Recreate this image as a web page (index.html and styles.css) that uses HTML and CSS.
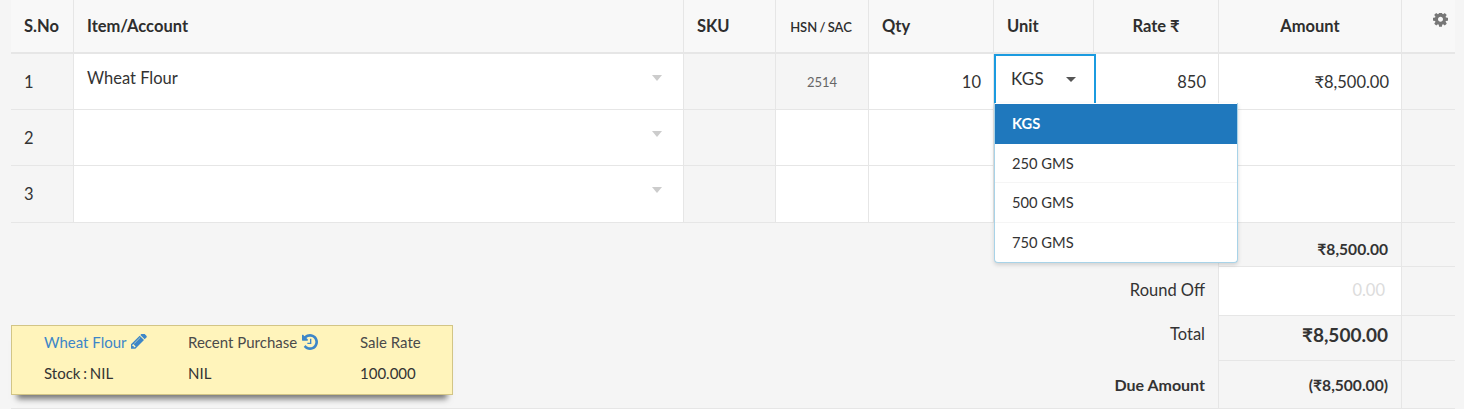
FILE: index.html
```html
<!DOCTYPE html>
<html lang="en">
<head>
<meta charset="utf-8">
<title>Invoice items</title>
<link rel="stylesheet" href="styles.css">
</head>
<body>
<main class="sheet">
  <div class="row head">
    <div class="cell">S.No</div>
    <div class="cell">Item/Account</div>
    <div class="cell">SKU</div>
    <div class="cell hsn-head">HSN / SAC</div>
    <div class="cell">Qty</div>
    <div class="cell">Unit</div>
    <div class="cell c-center">Rate ₹</div>
    <div class="cell c-center">Amount</div>
    <div class="cell gear-cell">
      <svg class="gear" viewBox="0 0 1536 1536"><path d="M1024 640q0-106-75-181t-181-75-181 75-75 181 75 181 181 75 181-75 75-181zm512-109v222q0 12-8 23t-20 13l-185 28q-19 54-39 91 35 50 107 138 10 12 10 25t-9 23q-27 37-99 108t-94 71q-12 0-26-9l-138-108q-44 23-91 38-16 136-29 186-7 28-36 28h-222q-14 0-24.5-8.5t-11.5-21.5l-28-184q-49-16-90-37l-141 107q-10 9-25 9-14 0-25-11-126-114-165-168-7-10-7-23 0-12 8-23 15-21 51-66.5t54-70.5q-27-50-41-99l-183-27q-13-2-21-12.5t-8-23.5v-222q0-12 8-23t19-13l186-28q14-46 39-92-40-57-107-138-10-12-10-24 0-10 9-23 26-36 98.5-107.5t94.5-71.5q13 0 26 10l138 107q44-23 91-38 16-136 29-186 7-28 36-28h222q14 0 24.5 8.5t11.5 21.5l28 184q49 16 90 37l142-107q9-9 24-9 13 0 25 10 129 119 165 170 7 8 7 22 0 12-8 23-15 21-51 66.5t-54 70.5q26 50 41 98l183 28q13 2 21 12.5t8 23.5z"/></svg>
    </div>
  </div>

  <div class="row item">
    <div class="cell sno">1</div>
    <div class="cell white pick"><span>Wheat Flour</span><i class="caret"></i></div>
    <div class="cell"></div>
    <div class="cell hsn">2514</div>
    <div class="cell white num">10</div>
    <div class="cell white unit"><span>KGS</span><i class="caret dark"></i></div>
    <div class="cell white num">850</div>
    <div class="cell white num">₹8,500.00</div>
    <div class="cell"></div>
  </div>
  <div class="row item">
    <div class="cell sno">2</div>
    <div class="cell white pick"><span></span><i class="caret"></i></div>
    <div class="cell"></div>
    <div class="cell white"></div>
    <div class="cell white"></div>
    <div class="cell white"></div>
    <div class="cell white"></div>
    <div class="cell white"></div>
    <div class="cell"></div>
  </div>
  <div class="row item last">
    <div class="cell sno">3</div>
    <div class="cell white pick"><span></span><i class="caret"></i></div>
    <div class="cell"></div>
    <div class="cell white"></div>
    <div class="cell white"></div>
    <div class="cell white"></div>
    <div class="cell white"></div>
    <div class="cell white"></div>
    <div class="cell"></div>
  </div>

  <ul class="menu">
    <li class="active">KGS</li>
    <li>250 GMS</li>
    <li>500 GMS</li>
    <li>750 GMS</li>
  </ul>

  <section class="summary">
    <div class="info">
      <div class="info-col col-a">
        <div class="link">Wheat Flour
          <svg class="ico" viewBox="0 0 1536 1536"><path d="M363 1280l91-91-235-235-91 91v107h128v128h107zm523-928q0-22-22-22-10 0-17 7l-542 542q-7 7-7 17 0 22 22 22 10 0 17-7l542-542q7-7 7-17zm-54-192l416 416-832 832h-416v-416zm683 96q0 53-37 90l-166 166-416-416 166-165q36-38 90-38 53 0 91 38l235 234q37 39 37 91z"/></svg>
        </div>
        <div class="val stock">Stock : NIL</div>
      </div>
      <div class="info-col col-b">
        <div class="lab">Recent Purchase
          <svg class="ico" viewBox="0 0 1536 1536"><path d="M1536 768q0 156-61 298t-164 245-245 164-298 61q-172 0-327-72.5t-264-204.5q-7-10-6.5-22.5t8.5-20.5l137-138q10-9 25-9 16 2 23 12 73 95 179 147t225 52q104 0 198.5-40.5t163.5-109.5 109.5-163.5 40.5-198.5-40.5-198.5-109.5-163.5-163.5-109.5-198.5-40.5q-98 0-188 35.5t-160 101.5l137 138q31 30 14 69-17 40-59 40h-448q-26 0-45-19t-19-45v-448q0-42 40-59 39-17 69 14l130 129q107-101 244.5-156.5t284.5-55.5q156 0 298 61t245 164 164 245 61 298zm-640-288v448q0 14-9 23t-23 9h-320q-14 0-23-9t-9-23v-64q0-14 9-23t23-9h224v-352q0-14 9-23t23-9h64q14 0 23 9t9 23z"/></svg>
        </div>
        <div class="val">NIL</div>
      </div>
      <div class="info-col">
        <div class="lab">Sale Rate</div>
        <div class="val">100.000</div>
      </div>
    </div>

    <div class="totals">
      <div class="t-row t-sub">
        <div class="t-label"></div>
        <div class="t-val strong">₹8,500.00</div>
        <div class="t-end"></div>
      </div>
      <div class="t-row t-round">
        <div class="t-label">Round Off</div>
        <div class="t-val white ghost">0.00</div>
        <div class="t-end"></div>
      </div>
      <div class="t-row t-total">
        <div class="t-label">Total</div>
        <div class="t-val big">₹8,500.00</div>
        <div class="t-end"></div>
      </div>
      <div class="t-row t-due">
        <div class="t-label strong due-label">Due Amount</div>
        <div class="t-val strong">(₹8,500.00)</div>
        <div class="t-end"></div>
      </div>
    </div>
  </section>
</main>
</body>
</html>
```

FILE: styles.css
```css
* { box-sizing: border-box; }
html, body { margin: 0; padding: 0; }
body {
  width: 1464px;
  height: 409px;
  overflow: hidden;
  background: #f5f5f5;
  color: #333;
  font-family: Lato, "Noto Sans", sans-serif;
  font-size: 16.5px;
}
.sheet { position: relative; margin-left: 11px; width: 1444px; }

.row {
  display: grid;
  grid-template-columns: 63px 610px 92px 93px 125px 100px 125px 183px 53px;
  grid-template-rows: minmax(0, 1fr);
  border-bottom: 1px solid #e6e6e6;
}
.cell { border-right: 1px solid #e6e6e6; padding: 0 13px; }
.cell:last-child { border-right: 0; }

.head { height: 54px; background: #f8f8f8; border-bottom-width: 2px; font-weight: 700; line-height: 52px; color: #2e2e2e; }
.c-center { text-align: center; }
.hsn-head { font-size: 13px; font-weight: 600; word-spacing: -1px; padding: 1px 2px 0 0; text-align: center; }
.gear-cell { display: flex; justify-content: flex-end; padding: 13px 7px 0 0; }
.gear { width: 15px; height: 15px; fill: #777; }

.item { height: 56px; }
.item.last { height: 57px; }
.sno { line-height: 57px; }
.white { background: #fff; }
.pick { display: flex; justify-content: space-between; padding: 9px 21px 0 13px; line-height: 30px; }
.caret { width: 0; height: 0; border: 5px solid transparent; border-top: 6px solid #ccc; border-bottom: 0; margin-top: 12px; }
.caret.dark { border-top: 5px solid #555; margin-top: 13px; }
.hsn { background: #f5f5f5; font-size: 13px; color: #666; text-align: center; line-height: 57px; padding: 0; }
.num { text-align: right; line-height: 56px; padding: 0 12px; }
.unit {
  display: flex;
  justify-content: space-between;
  margin: 0 -2px 0 0;
  height: 49px;
  border: 2px solid #1b9be0;
  border-bottom: 0;
  padding: 8px 18px 0 15px;
  font-size: 17px;
  letter-spacing: .3px;
  line-height: 30px;
  position: relative;
  z-index: 1;
}

.menu {
  position: absolute;
  left: 983px;
  top: 103px;
  width: 244px;
  margin: 0;
  padding: 1px 0 0;
  list-style: none;
  background: #fff;
  border: 1px solid #a8d3e8;
  border-top: 0;
  border-radius: 0 0 4px 4px;
  box-shadow: 0 2px 4px rgba(0,0,0,.15);
  font-size: 14.7px;
  z-index: 2;
}
.menu li { height: 39.5px; line-height: 38.5px; padding: 0 17px; border-bottom: 1px solid #f5f5f5; color: #333; }
.menu li:last-child { border-bottom: 0; }
.menu .active { background: #1f78bd; color: #fff; font-weight: 700; border-bottom: 0; }

.summary { display: flex; justify-content: space-between; align-items: flex-start; height: 186px; border-bottom: 1px solid #e6e6e6; }
.info {
  display: flex;
  width: 442px;
  height: 70px;
  margin-top: 102px;
  padding: 7px 0 0 32px;
  background: #fff4bb;
  border: 1px solid #d2c586;
  box-shadow: 0 10px 6px -6px #777;
  font-size: 15px;
}
.info-col { line-height: 18px; }
.col-a { width: 144px; }
.col-b { width: 172px; }
.info .val { margin-top: 13px; color: #333; }
.stock { word-spacing: -1px; }
.link { color: #3d86c8; }
.lab { color: #4a4a4a; }
.ico { width: 16px; height: 16px; margin-left: 1px; fill: #3d86c8; vertical-align: -2px; }

.totals { width: 443px; }
.t-row { display: grid; grid-template-columns: 206px 184px 53px; grid-template-rows: minmax(0, 1fr); }
.t-label { text-align: right; padding-right: 13px; }
.t-val { text-align: right; padding-right: 13px; border-left: 1px solid #e6e6e6; border-right: 1px solid #e6e6e6; border-bottom: 1px solid #e6e6e6; }
.t-end { border-bottom: 1px solid #e6e6e6; }
.strong { font-weight: 700; font-size: 15.6px; }
.due-label { font-size: 16px; }
.t-sub { height: 44px; line-height: 52px; }
.t-round { height: 49px; line-height: 46px; }
.t-total { height: 45px; line-height: 36px; }
.t-due { height: 47px; line-height: 48px; }
.t-due .t-val, .t-due .t-end { border-bottom: 0; }
.ghost { color: #dcdcdc; padding-right: 16px; }
.big { font-size: 19px; font-weight: 700; line-height: 38px; }
```
